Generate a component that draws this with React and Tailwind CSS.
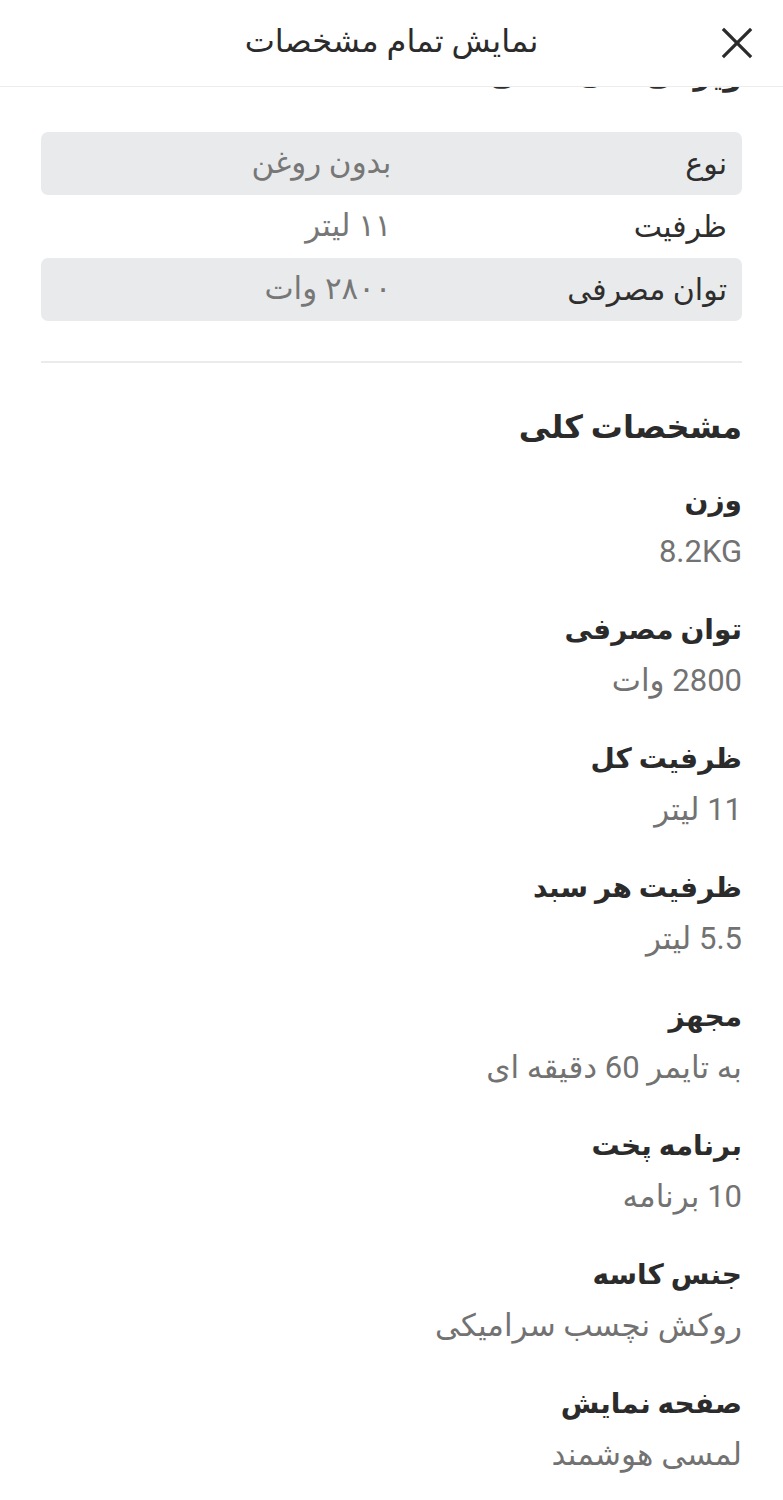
import React from "react";

const FONT = { fontFamily: '"Roboto", "DejaVu Sans", sans-serif' };

const table = [
  ["نوع", "بدون روغن", true],
  ["ظرفیت", "۱۱ لیتر", false],
  ["توان مصرفی", "۲۸۰۰ وات", true],
];

const specs = [
  ["وزن", "8.2KG"],
  ["توان مصرفی", "2800 وات"],
  ["ظرفیت کل", "11 لیتر"],
  ["ظرفیت هر سبد", "5.5 لیتر"],
  ["مجهز", "به تایمر 60 دقیقه ای"],
  ["برنامه پخت", "10 برنامه"],
  ["جنس کاسه", "روکش نچسب سرامیکی"],
  ["صفحه نمایش", "لمسی هوشمند"],
];

export default function App() {
  return (
    <div dir="rtl" style={FONT} className="w-[783px] h-[1500px] bg-white overflow-hidden text-[#2e2e2e]">
      <header className="grid grid-cols-[96px_1fr_96px] items-center h-[87px] border-b border-[#ececec] bg-white relative z-10">
        <div className="flex justify-start pr-[29px]">
          <svg width="34" height="34" viewBox="0 0 34 34" fill="none" stroke="#2b2b2b" strokeWidth="3.2" strokeLinecap="square">
            <line x1="4" y1="4" x2="30" y2="30" />
            <line x1="30" y1="4" x2="4" y2="30" />
          </svg>
        </div>
        <h1 className="text-center text-[32px] leading-none text-[#2b2b2b] -mt-[4px]">نمایش تمام مشخصات</h1>
        <div />
      </header>
      <main className="px-[41px] overflow-hidden">
        <div className="-mt-[32px] h-[40px] text-[30px] font-bold leading-[40px] text-[#2e2e2e]">ویژگی های اصلی</div>
        <div className="mt-[37px] flex flex-col">
          {table.map(([k, v, shaded], i) => (
            <div key={i} className={`grid grid-cols-2 items-center h-[63px] rounded-[7px] ${shaded ? "bg-[#e9eaeb]" : ""}`}>
              <div className="pr-[15px] text-[30px] text-[#2e2e2e]">{k}</div>
              <div className="text-[31px] text-[#777777]">{v}</div>
            </div>
          ))}
        </div>
        <div className="mt-[40px] border-t-2 border-[#ebebeb]" />
        <h2 className="mt-[44px] text-[32px] font-bold leading-[40px] text-[#2b2b2b]">مشخصات کلی</h2>
        <div className="mt-[33px] flex flex-col gap-[36px]">
          {specs.map(([k, v], i) => (
            <div key={i} className="flex flex-col gap-[9px]">
              <div className="text-[28px] font-bold leading-[42px] text-[#2b2b2b]">{k}</div>
              <div className="text-[31px] leading-[42px] text-[#727272]">{v}</div>
            </div>
          ))}
        </div>
      </main>
    </div>
  );
}
